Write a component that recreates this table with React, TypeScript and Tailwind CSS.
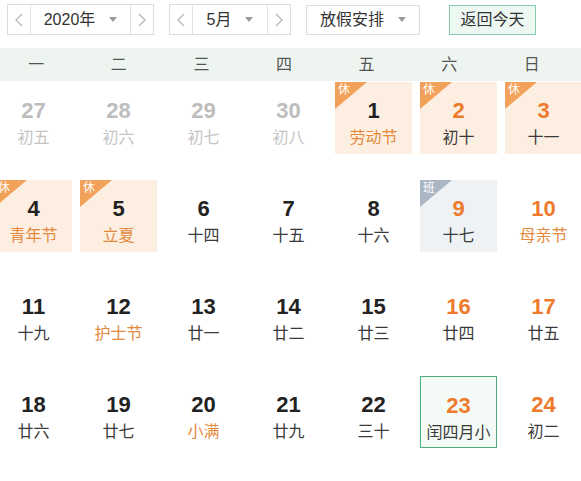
import React from "react"

type Day = {
  n: number
  lunar: string
  muted?: boolean
  weekend?: boolean
  festival?: boolean
  tag?: "休" | "班"
  today?: boolean
}

const weeks: Day[][] = [
  [
    { n: 27, lunar: "初五", muted: true },
    { n: 28, lunar: "初六", muted: true },
    { n: 29, lunar: "初七", muted: true },
    { n: 30, lunar: "初八", muted: true },
    { n: 1, lunar: "劳动节", festival: true, tag: "休" },
    { n: 2, lunar: "初十", weekend: true, tag: "休" },
    { n: 3, lunar: "十一", weekend: true, tag: "休" },
  ],
  [
    { n: 4, lunar: "青年节", festival: true, tag: "休" },
    { n: 5, lunar: "立夏", festival: true, tag: "休" },
    { n: 6, lunar: "十四" },
    { n: 7, lunar: "十五" },
    { n: 8, lunar: "十六" },
    { n: 9, lunar: "十七", weekend: true, tag: "班" },
    { n: 10, lunar: "母亲节", weekend: true, festival: true },
  ],
  [
    { n: 11, lunar: "十九" },
    { n: 12, lunar: "护士节", festival: true },
    { n: 13, lunar: "廿一" },
    { n: 14, lunar: "廿二" },
    { n: 15, lunar: "廿三" },
    { n: 16, lunar: "廿四", weekend: true },
    { n: 17, lunar: "廿五", weekend: true },
  ],
  [
    { n: 18, lunar: "廿六" },
    { n: 19, lunar: "廿七" },
    { n: 20, lunar: "小满", festival: true },
    { n: 21, lunar: "廿九" },
    { n: 22, lunar: "三十" },
    { n: 23, lunar: "闰四月小", weekend: true, today: true },
    { n: 24, lunar: "初二", weekend: true },
  ],
]

const weekdays = ["一", "二", "三", "四", "五", "六", "日"]

function Chevron({ dir }: { dir: "left" | "right" }) {
  return (
    <svg width="8" height="14" viewBox="0 0 8 14" fill="none">
      <polyline
        points={dir === "left" ? "7,1 1,7 7,13" : "1,1 7,7 1,13"}
        stroke="#b8b8b8"
        strokeWidth="1.3"
      />
    </svg>
  )
}

function Caret() {
  return <span className="ml-[14px] w-0 h-0 border-l-[4px] border-r-[4px] border-t-[5px] border-l-transparent border-r-transparent border-t-[#9a9a9a]" />
}

function Stepper({ label, midWidth }: { label: string; midWidth: string }) {
  return (
    <div className="flex h-[31px] border border-[#dcdcdc] bg-white">
      <button className="w-[23px] flex items-center justify-center border-r border-[#e2e2e2]">
        <Chevron dir="left" />
      </button>
      <div className={`${midWidth} flex items-center justify-center text-[16px] text-[#333]`}>
        <span>{label}</span>
        <Caret />
      </div>
      <button className="w-[23px] flex items-center justify-center border-l border-[#e2e2e2]">
        <Chevron dir="right" />
      </button>
    </div>
  )
}

function DayCell({ d }: { d: Day }) {
  let bg = ""
  if (d.tag === "休") bg = "bg-[#fcefe1]"
  if (d.tag === "班") bg = "bg-[#eef2f5]"
  if (d.today) bg = "bg-[#f4fbf7] border-[1.5px] border-[#4dae7d]"

  let numColor = "text-[#222]"
  if (d.weekend) numColor = "text-[#ee7a2c]"
  if (d.muted) numColor = "text-[#bdbdbd]"

  let lunarColor = "text-[#3a3a3a]"
  if (d.festival) lunarColor = "text-[#e48a3e]"
  if (d.muted) lunarColor = "text-[#c4c4c4]"

  return (
    <div className={`relative h-[72px] flex flex-col items-center pt-[16px] ${bg} ${d.today ? "pt-[12px]" : ""}`}>
      {d.tag && (
        <>
          <div
            className={`absolute left-0 top-0 w-[32px] h-[27px] [clip-path:polygon(0_0,100%_0,0_100%)] ${
              d.tag === "休" ? "bg-[#f2a15a]" : "bg-[#aab6c3]"
            }`}
          />
          <span className="absolute left-[3px] top-[1px] text-[12px] leading-[14px] text-white">{d.tag}</span>
        </>
      )}
      <div className={`relative text-[22px] leading-[26px] font-bold ${numColor}`}>{d.n}</div>
      <div className={`relative mt-[4px] text-[16px] leading-[20px] ${lunarColor}`}>{d.lunar}</div>
    </div>
  )
}

export default function App() {
  return (
    <div className="w-[581px] h-[481px] overflow-hidden bg-white font-['Liberation_Sans','Noto_Sans_CJK_SC',sans-serif]">
      <div className="flex items-center pt-[4px] pl-[7px]">
        <Stepper label="2020年" midWidth="w-[99px]" />
        <div className="ml-[15px]">
          <Stepper label="5月" midWidth="w-[74px]" />
        </div>
        <div className="ml-[15px] h-[30px] w-[114px] flex items-center justify-center border border-[#dcdcdc] text-[16px] text-[#333]">
          <span>放假安排</span>
          <Caret />
        </div>
        <button className="ml-[29px] h-[30px] w-[87px] flex items-center justify-center border border-[#86cbaa] bg-[#eef8f3] text-[16px] text-[#333]">
          返回今天
        </button>
      </div>

      <div className="mt-[13px] h-[33px] bg-[#eef5f1]">
        <div className="grid grid-cols-7 w-[578px] -ml-[5px] h-full items-center">
          {weekdays.map((w) => (
            <div key={w} className="text-center text-[16px] text-[#555]">
              {w}
            </div>
          ))}
        </div>
      </div>

      <div className="-ml-[5px] w-[600px] pt-[1px] flex flex-col gap-[26px]">
        {weeks.map((week, i) => (
          <div key={i} className="grid grid-cols-[repeat(7,77px)] gap-x-[8px]">
            {week.map((d) => (
              <DayCell key={`${i}-${d.n}`} d={d} />
            ))}
          </div>
        ))}
      </div>
    </div>
  )
}
